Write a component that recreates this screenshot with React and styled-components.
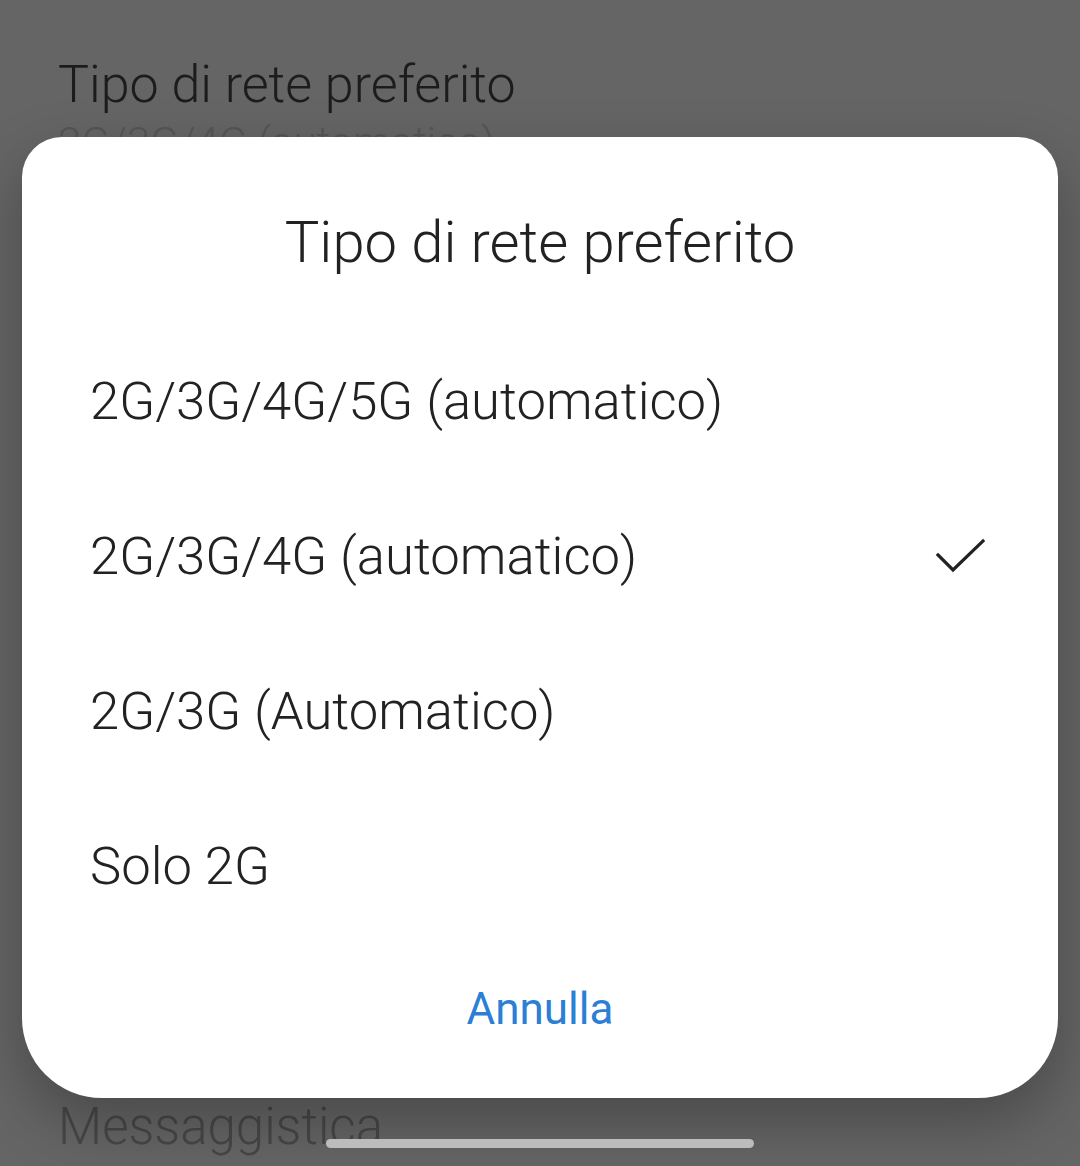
import React from "react"
import styled, { createGlobalStyle } from "styled-components"

const GlobalStyle = createGlobalStyle`
  html, body {
    margin: 0;
    padding: 0;
    background: #656565;
  }
  body {
    font-family: Roboto, "Liberation Sans", sans-serif;
    font-weight: 300;
    -webkit-font-smoothing: antialiased;
  }
`

const Screen = styled.div`
  position: relative;
  width: 1080px;
  height: 1166px;
  overflow: hidden;
  background: #656565;
`

const SettingsList = styled.div`
  height: 100%;
  box-sizing: border-box;
  padding: 55px 58px 11px;
  display: flex;
  flex-direction: column;
  justify-content: space-between;
`

const SettingTitle = styled.div`
  font-size: 52px;
  line-height: 60px;
  color: #1c1c1c;
`

const SettingValue = styled.div`
  margin-top: 3px;
  font-size: 42px;
  line-height: 50px;
  color: #555555;
`

const SectionLabel = styled.div`
  font-size: 51px;
  line-height: 56px;
  color: #474747;
`

const Dialog = styled.div`
  position: absolute;
  left: 22px;
  top: 137px;
  width: 1036px;
  height: 961px;
  box-sizing: border-box;
  background: #ffffff;
  border-radius: 40px 40px 80px 80px;
  box-shadow: 0 24px 60px rgba(0, 0, 0, 0.28);
  padding-top: 72px;
  display: flex;
  flex-direction: column;
`

const DialogTitle = styled.h2`
  margin: 0;
  text-align: center;
  font-weight: 300;
  font-size: 58px;
  line-height: 66px;
  color: #222222;
`

const Options = styled.ul`
  list-style: none;
  margin: 48px 0 0;
  padding: 0;
`

const Option = styled.li`
  height: 155px;
  display: flex;
  align-items: center;
  justify-content: space-between;
  padding: 0 73px 0 68px;
  font-size: 52.6px;
  line-height: 62px;
  color: #222222;
`

const Cancel = styled.button`
  margin: 40px auto 0;
  padding: 0;
  border: none;
  background: transparent;
  font-family: inherit;
  font-weight: 400;
  font-size: 44px;
  line-height: 52px;
  color: #2b7fd4;
`

const HomeBar = styled.div`
  position: absolute;
  left: 326px;
  top: 1139px;
  width: 428px;
  height: 9px;
  border-radius: 5px;
  background: #bcbcbc;
`

const Check = () => (
  <svg width="50" height="36" viewBox="0 0 50 36" fill="none">
    <path d="M3 17 L18 32 L48 3" stroke="#222" strokeWidth="3.2" strokeLinecap="square" />
  </svg>
)

const options = [
  { label: "2G/3G/4G/5G (automatico)" },
  { label: "2G/3G/4G (automatico)", selected: true },
  { label: "2G/3G (Automatico)" },
  { label: "Solo 2G" },
]

export default function App() {
  return (
    <Screen>
      <GlobalStyle />
      <SettingsList>
        <div>
          <SettingTitle>Tipo di rete preferito</SettingTitle>
          <SettingValue>2G/3G/4G (automatico)</SettingValue>
        </div>
        <SectionLabel>Messaggistica</SectionLabel>
      </SettingsList>

      <Dialog>
        <DialogTitle>Tipo di rete preferito</DialogTitle>
        <Options>
          {options.map(o => (
            <Option key={o.label}>
              <span>{o.label}</span>
              {o.selected && <Check />}
            </Option>
          ))}
        </Options>
        <Cancel>Annulla</Cancel>
      </Dialog>

      <HomeBar />
    </Screen>
  )
}
